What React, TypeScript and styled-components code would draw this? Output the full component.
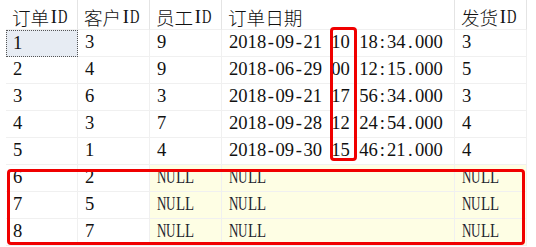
import styled, { createGlobalStyle } from "styled-components";

const PITCH = 9.3;

const GlobalStyle = createGlobalStyle`
  html, body {
    margin: 0;
    padding: 0;
    background: #ffffff;
  }
  body {
    font-family: "Liberation Serif", "Noto Sans CJK SC", serif;
    font-size: 18.6px;
    color: #111111;
  }
`;

const headers = ["订单ID", "客户ID", "员工ID", "订单日期", "发货ID"];

const rows = [
  ["1", "3", "9", "2018-09-21 10 18:34.000", "3"],
  ["2", "4", "9", "2018-06-29 00 12:15.000", "5"],
  ["3", "6", "3", "2018-09-21 17 56:34.000", "3"],
  ["4", "3", "7", "2018-09-28 12 24:54.000", "4"],
  ["5", "1", "4", "2018-09-30 15 46:21.000", "4"],
  ["6", "2", null, null, null],
  ["7", "5", null, null, null],
  ["8", "7", null, null, null],
];

// squeeze wide latin glyphs so they fit the fixed half-width pitch
const squeeze: Record<string, number> = { N: 0.7, U: 0.7, D: 0.7, L: 0.8 };

const isWide = (c: string) => /[\u3000-\u9fff\uff00-\uffef]/.test(c);

const Mono = ({ text }: { text: string }) => (
  <>
    {text.split("").map((c, i) => (
      <Ch key={i} $wide={isWide(c)} $scale={squeeze[c] ?? 1}>
        {c === " " ? "\u00a0" : c}
      </Ch>
    ))}
  </>
);

const App = () => {
  return (
    <Page>
      <GlobalStyle />
      <Grid>
        {headers.map((h) => (
          <HeaderCell key={h}>
            <Mono text={h} />
          </HeaderCell>
        ))}
        {rows.map((r, ri) =>
          r.map((v, ci) => (
            <Cell key={`${ri}-${ci}`} $selected={ri === 0 && ci === 0} $null={v === null}>
              <Mono text={v ?? "NULL"} />
            </Cell>
          ))
        )}
      </Grid>
      <Highlight $left={330} $top={27} $width={27} $height={134} />
      <Highlight $left={7} $top={169} $width={518} $height={76} />
    </Page>
  );
};

const Page = styled.div`
  position: relative;
  width: 536px;
  height: 247px;
  overflow: hidden;
  padding-left: 6px;
  box-sizing: border-box;
`;

const Grid = styled.div`
  display: grid;
  grid-template-columns: 72px 72px 72px 233px 72px;
  grid-template-rows: 30px repeat(8, 27px);
`;

const HeaderCell = styled.div`
  display: flex;
  align-items: center;
  box-sizing: border-box;
  padding: 4px 0 0 6px;
  border-right: 1px solid #e4e4e4;
  border-bottom: 1px solid #f0f0f0;
  white-space: nowrap;
`;

const Cell = styled.div<{ $selected?: boolean; $null?: boolean }>`
  display: flex;
  align-items: center;
  box-sizing: border-box;
  padding: 0 0 2px 7px;
  white-space: nowrap;
  border-right: 1px solid #f0f0f0;
  border-bottom: 1px solid #f0f0f0;
  background: ${({ $selected, $null }) =>
    $selected ? "#e7ecf3" : $null ? "#fefee4" : "transparent"};
  color: ${({ $null }) => ($null ? "#1c2430" : "#111111")};
  ${({ $selected }) =>
    $selected &&
    `
    border: 1px dotted #555;
    padding-left: 6px;
  `}
`;

const Ch = styled.span<{ $wide: boolean; $scale: number }>`
  display: inline-flex;
  justify-content: center;
  width: ${({ $wide }) => ($wide ? PITCH * 2 : PITCH)}px;
  font-family: ${({ $wide }) =>
    $wide ? `"Noto Sans CJK SC", sans-serif` : `"Liberation Serif", serif`};
  font-weight: ${({ $wide }) => ($wide ? 300 : 400)};
  transform: scaleX(${({ $scale }) => $scale});
`;

const Highlight = styled.div<{ $left: number; $top: number; $width: number; $height: number }>`
  position: absolute;
  left: ${({ $left }) => $left}px;
  top: ${({ $top }) => $top}px;
  width: ${({ $width }) => $width}px;
  height: ${({ $height }) => $height}px;
  box-sizing: border-box;
  border: 3px solid #f00000;
  border-radius: 4px;
  pointer-events: none;
`;

export default App;
